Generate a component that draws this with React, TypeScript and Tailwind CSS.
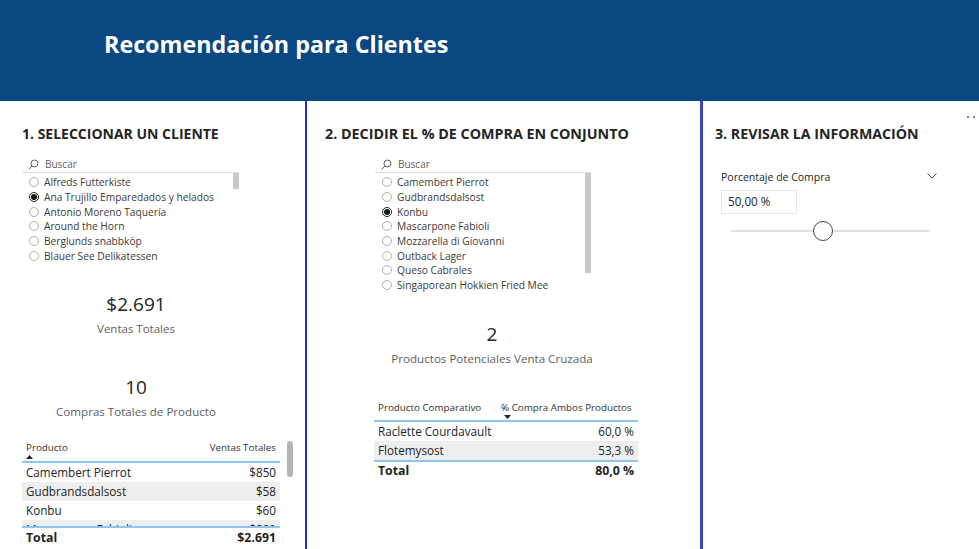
import React from "react";

const FONT = "font-['Segoe_UI','Open_Sans','Noto_Sans',sans-serif]";

const clientes = [
  { name: "Alfreds Futterkiste", selected: false },
  { name: "Ana Trujillo Emparedados y helados", selected: true },
  { name: "Antonio Moreno Taquería", selected: false },
  { name: "Around the Horn", selected: false },
  { name: "Berglunds snabbköp", selected: false },
  { name: "Blauer See Delikatessen", selected: false },
  { name: "Blondel père et fils", selected: false },
];

const productos = [
  { name: "Camembert Pierrot", selected: false },
  { name: "Gudbrandsdalsost", selected: false },
  { name: "Konbu", selected: true },
  { name: "Mascarpone Fabioli", selected: false },
  { name: "Mozzarella di Giovanni", selected: false },
  { name: "Outback Lager", selected: false },
  { name: "Queso Cabrales", selected: false },
  { name: "Singaporean Hokkien Fried Mee", selected: false },
  { name: "Tofu", selected: false },
];

const ventas = [
  { producto: "Camembert Pierrot", valor: "$850" },
  { producto: "Gudbrandsdalsost", valor: "$58" },
  { producto: "Konbu", valor: "$60" },
  { producto: "Mascarpone Fabioli", valor: "$800" },
];

const cruzada = [
  { producto: "Raclette Courdavault", valor: "60,0 %" },
  { producto: "Flotemysost", valor: "53,3 %" },
];

const SearchIcon = () => (
  <svg width="11" height="11" viewBox="0 0 11 11" fill="none" stroke="#605e5c" strokeWidth="1">
    <circle cx="6.5" cy="4.5" r="3.5" />
    <line x1="4" y1="7" x2="0.8" y2="10.2" />
  </svg>
);

const Radio = ({ selected }: { selected: boolean }) =>
  selected ? (
    <span className="flex h-[10px] w-[10px] shrink-0 items-center justify-center rounded-full border border-[#252423] bg-white">
      <span className="h-[6px] w-[6px] rounded-full bg-[#111]" />
    </span>
  ) : (
    <span className="h-[10px] w-[10px] shrink-0 rounded-full border border-[#b3b0ad] bg-white" />
  );

const Slicer = ({ items, width, listHeight, thumbHeight }: { items: { name: string; selected: boolean }[]; width: string; listHeight: string; thumbHeight: string }) => (
  <div className={width}>
    <div className="flex h-[16px] items-center gap-[6px] border-b border-[#e1dfdd] pl-[6px]">
      <SearchIcon />
      <span className="text-[10px] text-[#605e5c]">Buscar</span>
    </div>
    <div className={`relative overflow-hidden ${listHeight}`}>
      <div className={`absolute right-0 top-0 w-[6px] bg-[#c8c8c8] ${thumbHeight}`} />
      <div className="pt-[2px]">
        {items.map((it) => (
          <div key={it.name} className="flex h-[14.7px] items-center gap-[5px] pl-[7px]">
            <Radio selected={it.selected} />
            <span className="whitespace-nowrap text-[10.2px] leading-[14px] text-[#3b3a39]">{it.name}</span>
          </div>
        ))}
      </div>
    </div>
  </div>
);

const SortUp = () => (
  <svg width="7" height="4" viewBox="0 0 7 4"><polygon points="0,4 3.5,0 7,4" fill="#252423" /></svg>
);
const SortDown = () => (
  <svg width="7" height="4" viewBox="0 0 7 4"><polygon points="0,0 7,0 3.5,4" fill="#252423" /></svg>
);

export default function App() {
  return (
    <div className={`h-[549px] w-[979px] overflow-hidden bg-white text-[#252423] ${FONT}`}>
      <div className="flex h-[101px] items-center bg-[#0b4882] pb-[12px] pl-[104px]">
        <h1 className="text-[23.3px] font-bold text-white">Recomendación para Clientes</h1>
      </div>

      <div className="flex h-[448px]">
        {/* Columna 1 */}
        <div className="w-[307px] shrink-0 border-r-2 border-[#2a2ac4] px-[22px]">
          <h2 className="mt-[23px] h-[20px] text-[14px] font-bold leading-[20px]">1. SELECCIONAR UN CLIENTE</h2>
          <div className="mt-[13px]">
            <Slicer items={clientes} width="w-[217px]" listHeight="h-[92px]" thumbHeight="h-[16px]" />
          </div>
          <div className="mt-[27px] w-[228px] text-center">
            <div className="text-[19px] leading-[24px]">$2.691</div>
            <div className="mt-[4px] text-[11.5px] leading-[18px] text-[#605e5c]">Ventas Totales</div>
          </div>
          <div className="mt-[37px] w-[228px] text-center">
            <div className="text-[19px] leading-[24px]">10</div>
            <div className="mt-[4px] text-[11.6px] leading-[18px] text-[#605e5c]">Compras Totales de Producto</div>
          </div>
          <div className="relative mt-[20px] w-[258px]">
            <div className="absolute -right-[13px] top-[0px] h-[36px] w-[6px] rounded-full bg-[#b5b5b5]" />
            <div className="flex h-[22px] justify-between border-b-2 border-[#8cc4f4] px-[4px]">
              <div className="flex flex-col">
                <span className="text-[9.8px] leading-[14px] text-[#333]">Producto</span>
                <SortUp />
              </div>
              <span className="text-[9.8px] leading-[14px] text-[#333]">Ventas Totales</span>
            </div>
            <div className="h-[65px] overflow-hidden border-b-2 border-[#8cc4f4]">
              {ventas.map((v, i) => (
                <div key={v.producto} className={`flex h-[19px] items-center justify-between px-[4px] text-[11.7px] ${i % 2 === 1 ? "bg-[#eeeeee]" : ""}`}>
                  <span>{v.producto}</span>
                  <span>{v.valor}</span>
                </div>
              ))}
            </div>
            <div className="flex h-[20px] items-center justify-between px-[4px] text-[12.3px] font-bold">
              <span>Total</span>
              <span>$2.691</span>
            </div>
          </div>
        </div>

        {/* Columna 2 */}
        <div className="w-[396px] shrink-0 border-r-[3px] border-[#3c44c4]">
          <h2 className="ml-[18px] mt-[23px] h-[20px] text-[14.3px] font-bold leading-[20px]">2. DECIDIR EL % DE COMPRA EN CONJUNTO</h2>
          <div className="ml-[68px] mt-[13px]">
            <Slicer items={productos} width="w-[216px]" listHeight="h-[119px]" thumbHeight="h-[100px]" />
          </div>
          <div className="ml-[73px] mt-[30px] w-[224px] text-center">
            <div className="text-[19px] leading-[24px]">2</div>
            <div className="mt-[4px] whitespace-nowrap text-[11.6px] leading-[18px] text-[#605e5c]">Productos Potenciales Venta Cruzada</div>
          </div>
          <div className="ml-[67px] mt-[33px] w-[264px]">
            <div className="flex h-[21px] border-b-2 border-[#8cc4f4] px-[4px]">
              <span className="w-[123px] whitespace-nowrap text-[9.8px] leading-[14px] text-[#333]">Producto Comparativo</span>
              <div className="flex flex-1 flex-col items-start">
                <span className="whitespace-nowrap text-[9.8px] leading-[14px] text-[#333]">% Compra Ambos Productos</span>
                <span className="ml-[3px] flex"><SortDown /></span>
              </div>
            </div>
            <div className="border-b-2 border-[#8cc4f4]">
              {cruzada.map((c, i) => (
                <div key={c.producto} className={`flex h-[19px] items-center justify-between px-[4px] text-[11.7px] ${i % 2 === 1 ? "bg-[#eeeeee]" : ""}`}>
                  <span>{c.producto}</span>
                  <span>{c.valor}</span>
                </div>
              ))}
            </div>
            <div className="flex h-[18px] items-center justify-between px-[4px] text-[12.3px] font-bold">
              <span>Total</span>
              <span>80,0 %</span>
            </div>
          </div>
        </div>

        {/* Columna 3 */}
        <div className="relative flex-1 pl-[12px]">
          <div className="absolute right-[4px] top-[15px] flex gap-[4px]">
            <span className="h-[2px] w-[2px] rounded-full bg-[#555]" />
            <span className="h-[2px] w-[2px] rounded-full bg-[#555]" />
          </div>
          <h2 className="mt-[23px] h-[20px] text-[14.2px] font-bold leading-[20px]">3. REVISAR LA INFORMACIÓN</h2>
          <div className="ml-[6px] mt-[26px] w-[216px]">
            <div className="flex h-[16px] items-center justify-between">
              <span className="text-[10.5px]">Porcentaje de Compra</span>
              <svg width="10" height="6" viewBox="0 0 10 6" fill="none" stroke="#605e5c" strokeWidth="1" className="mb-[4px]">
                <polyline points="0.5,0.5 5,5 9.5,0.5" />
              </svg>
            </div>
            <div className="mt-[4px] flex h-[24px] w-[76px] items-center border border-[#e6e6e6] pl-[6px] text-[11.7px]">50,00 %</div>
            <div className="relative ml-[10px] mt-[7px] flex h-[20px] w-[199px] items-center">
              <div className="h-[2px] w-full bg-[#e1e1e1]" />
              <div className="absolute left-[82px] top-0 h-[20px] w-[20px] rounded-full border-[1.5px] border-[#444] bg-white" />
            </div>
          </div>
        </div>
      </div>
    </div>
  );
}
